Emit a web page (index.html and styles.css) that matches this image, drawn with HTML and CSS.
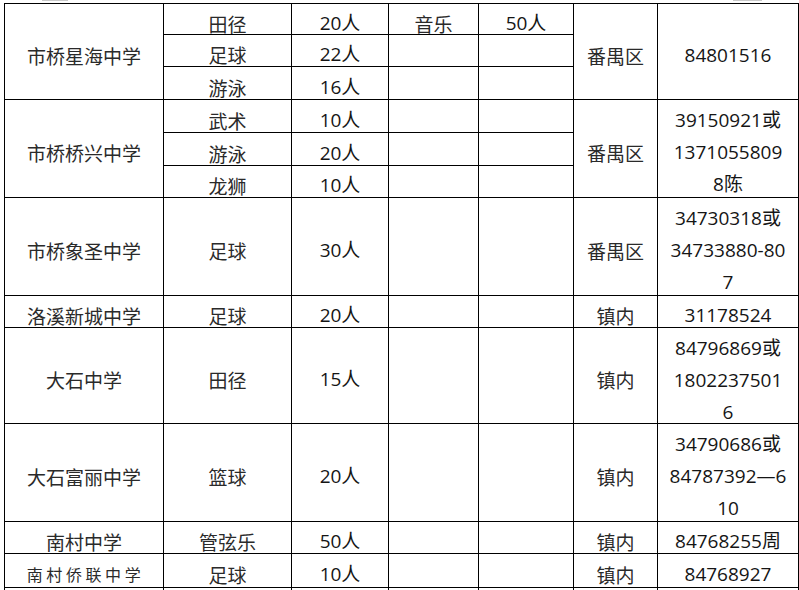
FILE: index.html
```html
<!DOCTYPE html>
<html lang="zh">
<head>
<meta charset="utf-8">
<link rel="stylesheet" href="styles.css">
</head>
<body>
<div class="marks"><span class="mark m1"></span><span class="mark m2"></span></div>
<table class="grid">
  <colgroup>
    <col class="c1"><col class="c2"><col class="c3"><col class="c4"><col class="c5"><col class="c6"><col class="c7">
  </colgroup>
  <tbody>
    <tr class="h31">
      <td rowspan="3">市桥星海中学</td>
      <td>田径</td><td class="num">20人</td><td>音乐</td><td class="num">50人</td>
      <td rowspan="3">番禺区</td><td rowspan="3" class="num">84801516</td>
    </tr>
    <tr class="h32"><td>足球</td><td class="num">22人</td><td></td><td></td></tr>
    <tr class="h33"><td>游泳</td><td class="num">16人</td><td></td><td></td></tr>

    <tr class="h33">
      <td rowspan="3">市桥桥兴中学</td>
      <td>武术</td><td class="num">10人</td><td></td><td></td>
      <td rowspan="3">番禺区</td>
      <td rowspan="3" class="num multi"><div class="ml">39150921或<br>1371055809<br>8陈</div></td>
    </tr>
    <tr class="h33"><td>游泳</td><td class="num">20人</td><td></td><td></td></tr>
    <tr class="h32"><td>龙狮</td><td class="num">10人</td><td></td><td></td></tr>

    <tr class="h98">
      <td>市桥象圣中学</td><td>足球</td><td class="num">30人</td><td></td><td></td>
      <td>番禺区</td>
      <td class="num multi"><div class="ml">34730318或<br>34733880-80<br>7</div></td>
    </tr>
    <tr class="h32">
      <td>洛溪新城中学</td><td>足球</td><td class="num">20人</td><td></td><td></td>
      <td>镇内</td><td class="num">31178524</td>
    </tr>
    <tr class="h96">
      <td>大石中学</td><td>田径</td><td class="num">15人</td><td></td><td></td>
      <td>镇内</td>
      <td class="num multi"><div class="ml">84796869或<br>1802237501<br>6</div></td>
    </tr>
    <tr class="h98">
      <td>大石富丽中学</td><td>篮球</td><td class="num">20人</td><td></td><td></td>
      <td>镇内</td>
      <td class="num multi"><div class="ml">34790686或<br>84787392—6<br>10</div></td>
    </tr>
    <tr class="h32">
      <td>南村中学</td><td>管弦乐</td><td class="num">50人</td><td></td><td></td>
      <td>镇内</td><td class="num">84768255周</td>
    </tr>
    <tr class="h34">
      <td class="spaced">南村侨联中学</td><td>足球</td><td class="num">10人</td><td></td><td></td>
      <td>镇内</td><td class="num">84768927</td>
    </tr>
    <tr class="h32"><td></td><td></td><td></td><td></td><td></td><td></td><td></td></tr>
  </tbody>
</table>
</body>
</html>
```

FILE: styles.css
```css
html, body {
  margin: 0;
  padding: 0;
  background: #ffffff;
  overflow: hidden;
}

body {
  width: 799px;
  height: 590px;
}

.marks {
  height: 3px;
  display: flex;
  align-items: flex-start;
  padding-left: 42px;
  gap: 665px;
}

.mark {
  display: block;
  height: 1px;
  background: #c8c8c8;
}

.m1 { width: 26px; }
.m2 { width: 29px; }

.grid {
  margin-left: 4px;
  border-collapse: collapse;
  table-layout: fixed;
  width: 795px;
  font-family: "Noto Sans CJK SC", sans-serif;
  font-size: 19px;
  font-weight: 400;
  color: #2a2a2a;
}

.c1 { width: 159px; }
.c2 { width: 128px; }
.c3 { width: 97px; }
.c4 { width: 90px; }
.c5 { width: 95px; }
.c6 { width: 84px; }
.c7 { width: 141px; }

.grid td {
  border: 1px solid #000;
  padding: 8px 0 0;
  line-height: 21px;
  height: 0;
  text-align: center;
  vertical-align: middle;
  white-space: nowrap;
}

.grid td.num {
  font-family: "Open Sans", "Noto Sans CJK SC", sans-serif;
  color: #151515;
}

.grid td.multi {
  padding: 0;
  vertical-align: top;
}

.ml {
  height: 88px;
  padding-top: 4px;
  line-height: 32px;
}

.grid td.spaced {
  font-size: 16px;
  letter-spacing: 3.6px;
  padding-left: 3px;
}

.h31 { height: 31px; }
.h32 { height: 32px; }
.h33 { height: 33px; }
.h34 { height: 34px; }
.h96 { height: 96px; }
.h98 { height: 98px; }
```
